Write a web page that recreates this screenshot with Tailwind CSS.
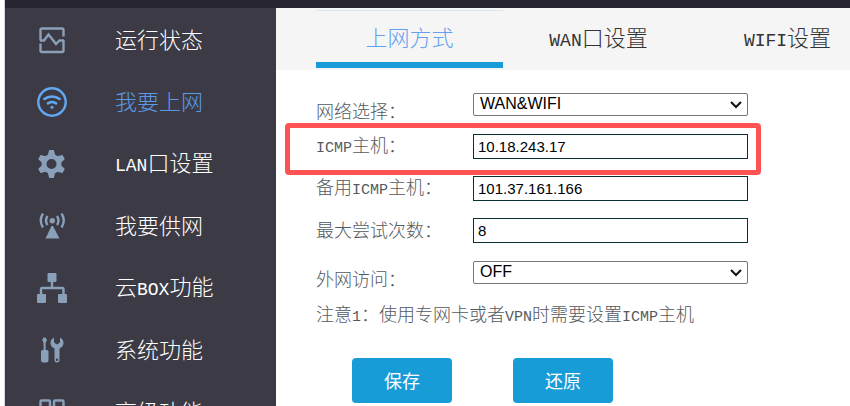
<!DOCTYPE html>
<html lang="zh-CN">
  <head>
    <meta charset="UTF-8">
    <meta name="viewport" content="width=device-width, initial-scale=1.0">
    <title>我要上网</title>
    <script src="https://cdn.jsdelivr.net/npm/@tailwindcss/browser@4"></script>
  </head>
  <body class="bg-white font-['Noto_Sans_CJK_SC',sans-serif] font-light">
    <div class="h-screen pl-1 overflow-hidden">
      <div class="h-full flex flex-col border-l border-gray-300">
        <header class="h-2 shrink-0 bg-[#262531]"></header>
        <div class="flex flex-1 min-h-0">

          <nav class="w-[271px] shrink-0 pt-px bg-[#3b3a45] text-white text-[22px] leading-8 overflow-hidden">
            <a href="#" class="flex items-center h-[62px] pl-8 gap-12">
              <svg class="w-[30px] h-[30px] text-[#8a9fb8]" viewBox="0 0 30 30" fill="none" stroke="currentColor" stroke-width="2.4">
                <path d="M3.5 15.5V5Q3.5 3.5 5 3.5H25Q26.5 3.5 26.5 5V11.5M3 15.500H7L11.5 9.5L19 19L22.5 15.5H27M26.5 15V25.5Q26.500 27 25 27H5Q3.500 27 3.500 25.5V18.5"/>
              </svg>
              <span class="pb-1">运行状态</span>
            </a>
            <a href="#" class="flex items-center h-[62px] pl-8 gap-12 text-[#5b9ae8]">
              <svg class="w-[30px] h-[30px] text-[#62a8f2]" viewBox="0 0 30 30" fill="none" stroke="currentColor" stroke-width="2.4">
                <circle cx="15" cy="15" r="13.7"/>
                <path d="M6.5 12.5Q15 6.500 23.5 12.5M10 17Q15 13 20 17"/>
                <circle cx="15" cy="20.3" r="1.5" fill="currentColor" stroke="none"/>
              </svg>
              <span class="pb-1">我要上网</span>
            </a>
            <a href="#" class="flex items-center h-[62px] pl-8 gap-12">
              <svg class="w-[30px] h-[30px] text-[#8a9fb8]" viewBox="0 0 30 30" fill="none" stroke="currentColor">
                <circle cx="14.5" cy="15" r="7.5" stroke-width="5"/>
                <g fill="currentColor" stroke="none">
                  <path id="tooth" d="M10.500 7.500L12 1.500Q12.100 1 12.600 1H16.400Q16.900 1 17 1.500L18.500 7.500Z"/>
                  <use href="#tooth" transform="rotate(60 14.5 15)"/>
                  <use href="#tooth" transform="rotate(120 14.5 15)"/>
                  <use href="#tooth" transform="rotate(180 14.5 15)"/>
                  <use href="#tooth" transform="rotate(240 14.5 15)"/>
                  <use href="#tooth" transform="rotate(300 14.5 15)"/>
                </g>
              </svg>
              <span class="pb-1"><span class="font-['Liberation_Mono'] text-lg">LAN</span>口设置</span>
            </a>
            <a href="#" class="flex items-center h-[62px] pl-8 gap-12">
              <svg class="w-[30px] h-[30px] text-[#8a9fb8]" viewBox="0 0 30 30" fill="none" stroke="currentColor" stroke-width="2.4">
                <path d="M6 2.500Q1.500 9.500 6 16.500M10.500 5Q7.500 9.500 10.500 14M24.500 2.500Q29 9.500 24.500 16.500M20 5Q23 9.500 20 14"/>
                <circle cx="15.3" cy="9.700" r="2.700" fill="currentColor" stroke="none"/>
                <path d="M14.500 15H16L22.500 27.500H8.500Z" fill="currentColor" stroke="none"/>
              </svg>
              <span class="pb-1">我要供网</span>
            </a>
            <a href="#" class="flex items-center h-[62px] pl-8 gap-12">
              <svg class="w-[30px] h-[30px] text-[#8a9fb8]" viewBox="0 0 30 30" fill="currentColor">
                <rect x="10.5" y="0" width="9" height="9" rx="1"/>
                <rect x="0" y="21" width="9" height="9" rx="1"/>
                <rect x="21" y="21" width="9" height="9" rx="1"/>
                <path d="M15 8V15M4 22V16Q4 15 5 15H25.5Q26.5 15 26.5 16V22" fill="none" stroke="currentColor" stroke-width="2.4"/>
              </svg>
              <span class="pb-1">云<span class="font-['Liberation_Mono'] text-lg">BOX</span>功能</span>
            </a>
            <a href="#" class="flex items-center h-[62px] pl-8 gap-12">
              <svg class="w-[30px] h-[30px] text-[#8a9fb8]" viewBox="0 0 30 30" fill="currentColor">
                <path d="M6.500 2.500H8.500L10 5L8.600 8V15H10Q11.500 15 11.500 16.500V25Q11.500 27.500 9 27.500H6Q4 27.500 4 25V16.500Q4 15 5.500 15H6.600V8L5.200 5Z"/>
                <path fill-rule="evenodd" d="M17 2.500V7.500L20 9.500L23 7.500V2.500Q26.500 4 26.500 8Q26.500 11.500 22.500 13.500V25Q22.500 27.500 20 27.500Q17.500 27.500 17.500 25V13.500Q13.500 11.500 13.500 8Q13.500 4 17 2.500ZM20 23.500A1.200 1.200 0 1 0 20 25.900A1.200 1.200 0 1 0 20 23.500Z"/>
              </svg>
              <span class="pb-1">系统功能</span>
            </a>
            <a href="#" class="flex items-center h-[62px] pl-8 gap-12">
              <svg class="w-[30px] h-[30px] text-[#8a9fb8]" viewBox="0 0 30 30" fill="none" stroke="currentColor" stroke-width="2.4">
                <rect x="3.5" y="3.5" width="9.5" height="9.5" rx="1"/>
                <rect x="17" y="3.5" width="9.5" height="9.5" rx="1"/>
                <rect x="3.5" y="17" width="9.5" height="9.5" rx="1"/>
                <rect x="17" y="17" width="9.5" height="9.5" rx="1"/>
              </svg>
              <span class="pb-1">高级功能</span>
            </a>
          </nav>

          <main class="flex-1 min-w-0">
            <div class="flex gap-0.5 h-[62px] pl-10 py-0.5 bg-[#f5f5f5] text-[#333] text-[22px] overflow-hidden">
              <a href="#" class="flex items-center justify-center w-[187px] shrink-0 border-t border-t-[#d5e6f5] border-b-6 border-b-[#189cd8] text-[#649ff0]">上网方式</a>
              <a href="#" class="flex items-center justify-center w-[187px] shrink-0 pb-1"><span><span class="font-['Liberation_Mono'] text-lg">WAN</span>口设置</span></a>
              <a href="#" class="flex items-center justify-center w-[187px] shrink-0 pb-1"><span><span class="font-['Liberation_Mono'] text-lg">WIFI</span>设置</span></a>
            </div>

            <form class="pl-10 pt-[13px] text-lg text-[#555a60]">
              <div class="flex items-center h-[42px]">
                <label for="network" class="w-[157px] pt-3">网络选择：</label>
                <div class="relative">
                  <select id="network" class="block appearance-none w-[275px] h-[23px] px-1.5 border border-[#767676] rounded-xs bg-white text-black font-['Liberation_Sans'] font-normal text-base leading-5">
                    <option>WAN&amp;WIFI</option>
                  </select>
                  <svg class="absolute right-1.5 top-2 w-3 h-2 pointer-events-none" viewBox="0 0 12 8" fill="none" stroke="#111" stroke-width="2"><path d="M1 1L6 6L11 1"/></svg>
                </div>
              </div>
              <div class="relative flex items-center h-[42px]">
                <label for="host" class="w-[157px] pb-0.5"><span class="font-['Liberation_Mono'] text-[15px]">ICMP</span>主机：</label>
                <input id="host" type="text" value="10.18.243.17" class="w-[275px] h-[25px] px-1 border border-[#0b3034] bg-white text-black font-['Liberation_Sans'] font-normal text-[15px]">
                <!-- highlight frame -->
                <span class="absolute -top-0.5 -left-[31px] w-[476px] h-[52px] border-5 border-[#fd5353] rounded-sm pointer-events-none"></span>
              </div>
              <div class="flex items-center h-[42px]">
                <label for="backup" class="w-[157px] pb-0.5">备用<span class="font-['Liberation_Mono'] text-[15px]">ICMP</span>主机：</label>
                <input id="backup" type="text" value="101.37.161.166" class="w-[275px] h-[25px] px-1 border border-[#0b3034] bg-white text-black font-['Liberation_Sans'] font-normal text-[15px]">
              </div>
              <div class="flex items-center h-[42px]">
                <label for="retries" class="w-[157px] pb-0.5">最大尝试次数：</label>
                <input id="retries" type="text" value="8" class="w-[275px] h-[25px] px-1 border border-[#0b3034] bg-white text-black font-['Liberation_Sans'] font-normal text-[15px]">
              </div>
              <div class="flex items-center h-[42px]">
                <label for="external" class="w-[157px] pt-3">外网访问：</label>
                <div class="relative">
                  <select id="external" class="block appearance-none w-[275px] h-[23px] px-1.5 border border-[#767676] rounded-xs bg-white text-black font-['Liberation_Sans'] font-normal text-base leading-5">
                    <option>OFF</option>
                  </select>
                  <svg class="absolute right-1.5 top-2 w-3 h-2 pointer-events-none" viewBox="0 0 12 8" fill="none" stroke="#111" stroke-width="2"><path d="M1 1L6 6L11 1"/></svg>
                </div>
              </div>
              <p class="leading-10 whitespace-nowrap">注意<span class="font-['Liberation_Mono'] text-[15px]">1</span>：使用专网卡或者<span class="font-['Liberation_Mono'] text-[15px]">VPN</span>时需要设置<span class="font-['Liberation_Mono'] text-[15px]">ICMP</span>主机</p>
              <div class="flex gap-[61px] pl-9 pt-5 text-white font-normal">
                <button type="button" class="w-[100px] h-[45px] pb-0.5 rounded-sm bg-[#189cd8]">保存</button>
                <button type="button" class="w-[100px] h-[45px] pb-0.5 rounded-sm bg-[#189cd8]">还原</button>
              </div>
            </form>
          </main>

        </div>
      </div>
    </div>
  </body>
</html>
